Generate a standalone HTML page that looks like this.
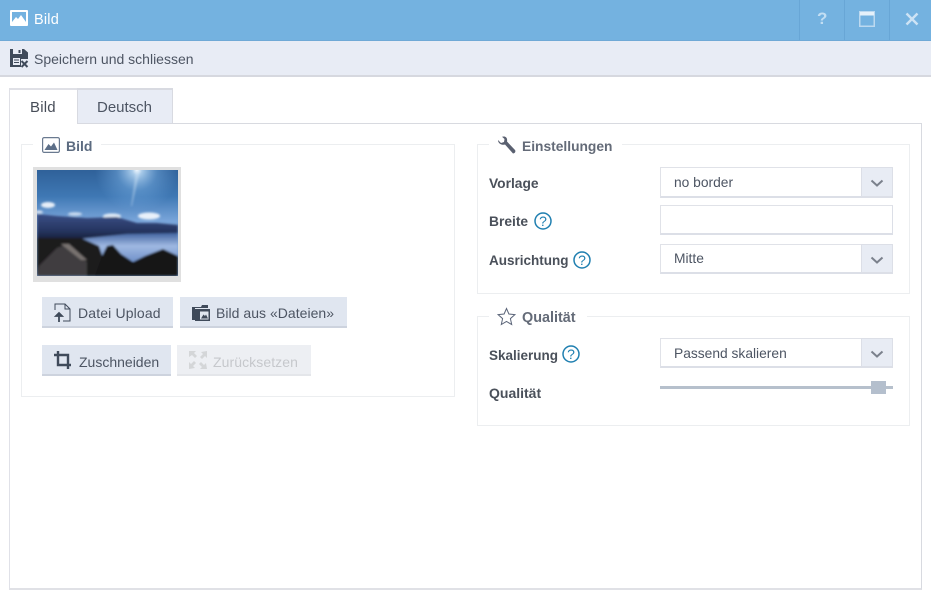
<!DOCTYPE html>
<html><head><meta charset="utf-8"><style>
html,body{margin:0;padding:0;background:#fff;width:931px;height:600px;overflow:hidden}
body{font-family:"Liberation Sans",sans-serif;color:#4d5563;position:relative}
.a{position:absolute;box-sizing:border-box}
.t{position:absolute;white-space:nowrap;font-size:14px;line-height:16px}
.b{font-weight:bold;font-size:14px;color:#4a505a}
.fs{position:absolute;box-sizing:border-box;border:1px solid #eceef0;background:#fff}
.leg{position:absolute;background:#fff;height:20px}
.btn{position:absolute;box-sizing:border-box;background:#e0e6f0;border-bottom:2px solid #cdd3de}
.inp{position:absolute;box-sizing:border-box;background:#fff;border:1px solid #e0e2e8;border-bottom:2px solid #dcdfe7;border-right:1px solid #dcdfe7}
.dd{position:absolute;right:-1px;top:-1px;width:32px;bottom:-2px;background:#e8ecf4;border:1px solid #dcdfe7;border-bottom:2px solid #dcdfe7;box-sizing:border-box}
svg{position:absolute;overflow:visible}
</style></head><body>
<div class="a" style="left:0;top:0;width:931px;height:41px;background:#74b2e0;border-bottom:1px solid #6fa9d6"></div>
<svg style="left:10px;top:10px" width="18" height="16"><rect x="0" y="0" width="18" height="16" rx="1" fill="#fff"/><rect x="2" y="2" width="14" height="10" fill="#74b2e0"/><path d="M2 12L6 7l2 2 3-4 5 7z" fill="#fff"/></svg>
<div class="t" style="left:34px;top:12px;color:#fff;font-size:14.500px;letter-spacing:.2px">Bild</div>
<div class="a" style="left:799px;top:0;width:1px;height:40px;background:#68a6d6"></div>
<div class="a" style="left:844px;top:0;width:1px;height:40px;background:#68a6d6"></div>
<div class="a" style="left:889px;top:0;width:1px;height:40px;background:#68a6d6"></div>
<div class="t" style="left:817px;top:9px;color:#c2def3;font-weight:bold;font-size:17px;line-height:19px">?</div>
<svg style="left:859px;top:11px" width="16" height="16"><rect x=".75" y=".75" width="14.5" height="14.5" fill="none" stroke="#bcd9f0" stroke-width="1.5"/><rect x="1" y="1" width="14" height="3.5" fill="#e6f1fa"/></svg>
<svg style="left:905px;top:12px" width="14" height="14"><path d="M1.500 1.500L12.500 12.500M12.500 1.500L1.500 12.500" stroke="#cde3f5" stroke-width="2.400" fill="none"/></svg>
<div class="a" style="left:0;top:41px;width:931px;height:36px;background:#e8ecf5;border-bottom:2px solid #d6d8df"></div>
<svg style="left:10px;top:49px" width="19" height="19"><path d="M0 0h14l4 3.500V10H11v8H0z" fill="#3f4a5a"/><rect x="3" y="0" width="9" height="5" fill="#e8ecf5"/><rect x="8.500" y="1" width="2" height="3" fill="#3f4a5a"/><rect x="3" y="9" width="7" height="7" fill="#e8ecf5"/><path d="M4 11h5M4 13.500h5" stroke="#3f4a5a"/><path d="M11.500 12l6 6M17.500 12l-6 6" stroke="#3f4a5a" stroke-width="2" fill="none"/></svg>
<div class="t" style="left:34px;top:51px;font-size:14px">Speichern und schliessen</div>

<div class="a" style="left:9px;top:123px;width:913px;height:467px;border:1px solid #d8dae0;border-top-width:1px;border-left-width:1px;border-left-color:#e0e1e8;border-bottom-width:2px;border-bottom-color:#e0e1e6"></div>
<div class="a" style="left:9px;top:88px;width:68px;height:37px;background:#fff;border:1px solid #dfe0e6;border-width:2px 0 0 1px"></div>
<div class="a" style="left:77px;top:88px;width:96px;height:36px;background:#e8ecf5;border:1px solid #d8dae1;border-width:2px 1px 1px 1px"></div>
<div class="t" style="left:30px;top:100px;font-size:15px;letter-spacing:.2px;color:#474d58">Bild</div>
<div class="t" style="left:97px;top:100px;font-size:15px;color:#4d5563">Deutsch</div>

<div class="fs" style="left:21px;top:144px;width:434px;height:253px"></div>
<div class="leg" style="left:33px;top:136px;width:68px"></div>
<svg style="left:42px;top:137px" width="18" height="16"><rect x=".6" y=".6" width="16.800" height="14.800" rx="1.500" fill="#fff" stroke="#6a7a90" stroke-width="1.200"/><path d="M2.500 13L6.500 7l2.500 2.500 3-4 3.500 7.500z" fill="#5d6f88"/></svg>
<div class="t b" style="left:66px;top:138px;color:#5c6b80;font-size:14px">Bild</div>

<div class="a" style="left:33px;top:167px;width:148px;height:115px;background:#e0e0e0"></div>
<svg style="left:37px;top:170px" width="141" height="106" viewBox="0 0 141 106"><defs>
<linearGradient id="s" x1="0" y1="0" x2="0" y2="1"><stop offset="0" stop-color="#2f6199"/><stop offset=".25" stop-color="#3f78b4"/><stop offset=".48" stop-color="#79a5da"/></linearGradient>
<radialGradient id="g" gradientUnits="userSpaceOnUse" cx="100" cy="0" r="42"><stop offset="0" stop-color="#f6fbff"/><stop offset=".12" stop-color="#b6d6f2" stop-opacity=".9"/><stop offset=".5" stop-color="#78aee2" stop-opacity=".45"/><stop offset="1" stop-color="#6fa6e0" stop-opacity="0"/></radialGradient>
<linearGradient id="w" x1="0" y1="0" x2="0" y2="1"><stop offset="0" stop-color="#41639f"/><stop offset=".45" stop-color="#a0b9e2"/><stop offset="1" stop-color="#6f90c9"/></linearGradient>
<linearGradient id="m" x1="0" y1="0" x2="0" y2="1"><stop offset="0" stop-color="#3a4f86"/><stop offset=".6" stop-color="#263560"/><stop offset="1" stop-color="#141a30"/></linearGradient>
<clipPath id="c"><rect width="141" height="106"/></clipPath>
<filter id="bl"><feGaussianBlur stdDeviation="1"/></filter></defs>
<rect width="141" height="106" fill="url(#s)"/>
<rect x="50" y="0" width="91" height="50" fill="url(#g)"/>
<g filter="url(#bl)" clip-path="url(#c)">
<path d="M99 0l4 0-8 36-1 0z" fill="#d4e6f8" opacity=".4"/>
<ellipse cx="11" cy="35" rx="7" ry="3" fill="#e6eef8"/><ellipse cx="2" cy="42" rx="4" ry="1.500" fill="#d8e4f4"/>
<ellipse cx="38" cy="44" rx="7" ry="1.800" fill="#c8daf0"/><ellipse cx="75" cy="46" rx="9" ry="2.500" fill="#dfeaf6"/><ellipse cx="112" cy="46" rx="11" ry="3.500" fill="#e8f0fa"/>
<path d="M0 44L20 46 50 48 80 47 100 53 120 53 141 55V72H0z" fill="url(#m)"/>
<path d="M42 69L90 64 141 63V86L100 92 60 84z" fill="url(#w)"/>
<path d="M0 68L44 68 62 76 72 106 0 106z" fill="#1a1a1c"/>
<path d="M2 96L20 78 28 75 50 92 50 106H0z" fill="#403e40"/>
<path d="M24 74L32 74 50 90 44 90z" fill="#787270"/>
<path d="M58 106L66 84 70 76 76 75 84 84 96 92 108 86 126 79 141 86V106z" fill="#131216"/>
</g></svg>

<div class="btn" style="left:42px;top:297px;width:131px;height:31px"></div>
<svg style="left:54px;top:303px" width="18" height="20"><path d="M1 7V1h10l5 5v12H9" fill="none" stroke="#3f4a5a" stroke-width="1"/><path d="M11 1v5h5" fill="none" stroke="#3f4a5a" stroke-width="1"/><path d="M5 19V12M2 13L5 10 8 13z" stroke="#3f4a5a" stroke-width="1.800" fill="#3f4a5a"/></svg>
<div class="t" style="left:78px;top:305px;letter-spacing:.15px">Datei Upload</div>
<div class="btn" style="left:180px;top:297px;width:167px;height:31px"></div>
<svg style="left:192px;top:304px" width="18" height="17"><path d="M0 3h9l1-2h6v3H3v12H0z" fill="#3f4a5a"/><rect x="3" y="5" width="15" height="12" fill="#3f4a5a"/><rect x="8" y="7.500" width="8.500" height="8" fill="#e0e6f0"/><path d="M9 14.500l2.500-4 1.500 1.500 1-1.500 2 4z" fill="#3f4a5a"/></svg>
<div class="t" style="left:216px;top:305px;letter-spacing:.03px">Bild aus «Dateien»</div>
<div class="btn" style="left:42px;top:345px;width:129px;height:31px"></div>
<svg style="left:54px;top:351px" width="18" height="18"><path d="M4 0v14h13M0 4h14v14" fill="none" stroke="#3f4a5a" stroke-width="2.400"/></svg>
<div class="t" style="left:79px;top:354px">Zuschneiden</div>
<div class="btn" style="left:177px;top:345px;width:134px;height:31px;background:#edeff3;border-bottom-color:#e4e6ea"></div>
<svg style="left:189px;top:351px" width="18" height="18" fill="#d4d6d8"><path d="M0 0h7L5 2l3 3-2 2-3-3-3 2zM18 0v7l-2-2-3 3-2-2 3-3-2-2zM0 18v-7l2 2 3-3 2 2-3 3 2 2zM18 18h-7l2-2-3-3 2-2 3 3 2-2z"/></svg>
<div class="t" style="left:213px;top:354px;color:#c6c8cc;letter-spacing:.08px">Zurücksetzen</div>

<div class="fs" style="left:477px;top:144px;width:433px;height:150px"></div>
<div class="leg" style="left:489px;top:136px;width:133px"></div>
<svg style="left:497px;top:136px" width="19" height="19"><path d="M1 4L4 7 7 6 7.500 3 5 .8C7 0 9.500.5 10 3c.3 1.500 0 2.500 0 2.500L18 14c1 1.200 0 3.500-2 3.500L8 8.500C5.500 9.500 1 8 1 4z" fill="#5a6070"/></svg>
<div class="t" style="left:522px;top:139px;font-weight:bold;font-size:13.800px;color:#646b78">Einstellungen</div>
<div class="t b" style="left:489px;top:176px;font-size:13.800px">Vorlage</div>
<div class="t b" style="left:489px;top:214px;font-size:13.800px">Breite</div>
<svg style="left:534px;top:212px" width="18" height="18"><circle cx="9" cy="9" r="8" fill="none" stroke="#1f7fb0" stroke-width="1.500"/><text x="9" y="14" text-anchor="middle" font-family="Liberation Sans" font-size="14" fill="#1f7fb0">?</text></svg>
<div class="t b" style="left:489px;top:253px;font-size:13.500px">Ausrichtung</div>
<svg style="left:573px;top:251px" width="18" height="18"><circle cx="9" cy="9" r="8" fill="none" stroke="#1f7fb0" stroke-width="1.500"/><text x="9" y="14" text-anchor="middle" font-family="Liberation Sans" font-size="14" fill="#1f7fb0">?</text></svg>

<div class="inp" style="left:660px;top:167px;width:233px;height:31px"><div class="t" style="left:13px;top:7px;font-size:13.800px">no border</div><div class="dd"><svg style="left:8px;top:11px" width="14" height="9"><path d="M1.500 1.500L7 6.500 12.500 1.500" stroke="#7b818c" stroke-width="2" fill="none"/></svg></div></div>
<div class="inp" style="left:660px;top:205px;width:233px;height:30px"></div>
<div class="inp" style="left:660px;top:244px;width:233px;height:30px"><div class="t" style="left:13px;top:6px;font-size:13.800px">Mitte</div><div class="dd"><svg style="left:8px;top:11px" width="14" height="9"><path d="M1.500 1.500L7 6.500 12.500 1.500" stroke="#7b818c" stroke-width="2" fill="none"/></svg></div></div>

<div class="fs" style="left:477px;top:316px;width:433px;height:110px"></div>
<div class="leg" style="left:489px;top:308px;width:98px"></div>
<svg style="left:497px;top:307px" width="19" height="19"><path d="M9.500 1.500l2.400 5.500 6 .6-4.500 4 1.300 5.900-5.200-3-5.200 3 1.300-5.900-4.500-4 6-.6z" fill="none" stroke="#5a6478" stroke-width="1"/></svg>
<div class="t" style="left:522px;top:310px;font-weight:bold;font-size:14.400px;color:#646b78">Qualität</div>
<div class="t b" style="left:489px;top:348px;font-size:13.500px">Skalierung</div>
<svg style="left:562px;top:345px" width="18" height="18"><circle cx="9" cy="9" r="8" fill="none" stroke="#1f7fb0" stroke-width="1.500"/><text x="9" y="14" text-anchor="middle" font-family="Liberation Sans" font-size="14" fill="#1f7fb0">?</text></svg>
<div class="t b" style="left:489px;top:385px">Qualität</div>
<div class="inp" style="left:660px;top:338px;width:233px;height:30px"><div class="t" style="left:13px;top:7px;font-size:13.800px">Passend skalieren</div><div class="dd"><svg style="left:8px;top:11px" width="14" height="9"><path d="M1.500 1.500L7 6.500 12.500 1.500" stroke="#7b818c" stroke-width="2" fill="none"/></svg></div></div>
<div class="a" style="left:660px;top:386px;width:233px;height:3px;background:#b6c0cc"></div>
<div class="a" style="left:871px;top:381px;width:15px;height:13px;background:#b4bfcd"></div>
</body></html>
